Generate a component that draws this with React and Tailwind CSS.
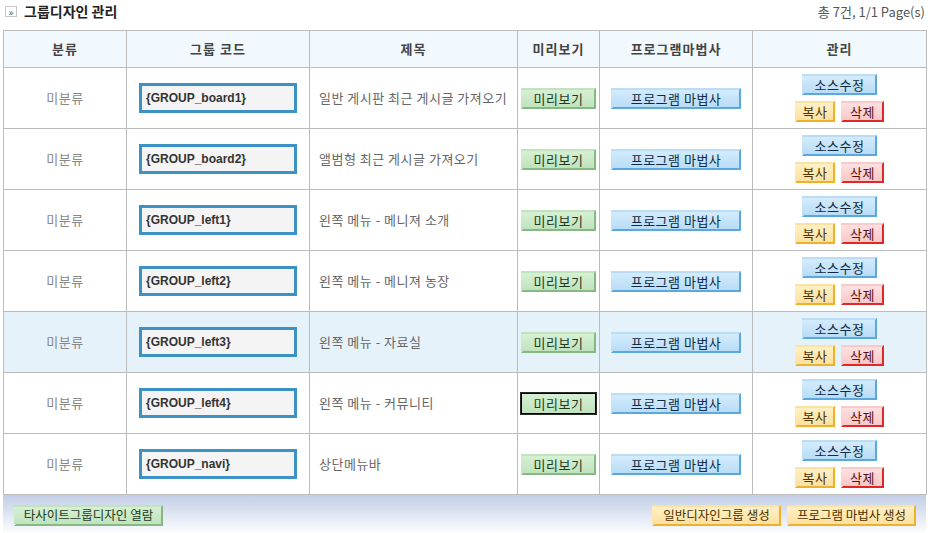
import React from "react";

const rows = [
  { code: "{GROUP_board1}", title: "일반 게시판 최근 게시글 가져오기" },
  { code: "{GROUP_board2}", title: "앨범형 최근 게시글 가져오기" },
  { code: "{GROUP_left1}", title: "왼쪽 메뉴 - 메니져 소개" },
  { code: "{GROUP_left2}", title: "왼쪽 메뉴 - 메니져 농장" },
  { code: "{GROUP_left3}", title: "왼쪽 메뉴 - 자료실", hover: true },
  { code: "{GROUP_left4}", title: "왼쪽 메뉴 - 커뮤니티", focus: true },
  { code: "{GROUP_navi}", title: "상단메뉴바" },
];

const font = { fontFamily: '"Noto Sans CJK KR", "Liberation Sans", sans-serif' };

function Btn({ color, className = "", children }) {
  const styles = {
    green: "bg-gradient-to-b from-[#d6f0d4] to-[#bfe3bd] border-r-[#86b884] border-b-[#86b884] text-[#1f3a1f]",
    blue: "bg-gradient-to-b from-[#d3ecfc] to-[#b9dcf6] border-r-[#5aa8e0] border-b-[#5aa8e0] text-[#0f2a44]",
    orange: "bg-gradient-to-b from-[#fff1c4] to-[#fde0a0] border-r-[#f0b028] border-b-[#f0b028] text-[#4a3200]",
    red: "bg-gradient-to-b from-[#fde0e0] to-[#f9c8c8] border-r-[#e02828] border-b-[#e02828] text-[#5a1010]",
  };
  return (
    <button
      className={`h-[21px] border-2 border-transparent leading-none whitespace-nowrap ${styles[color]} ${className}`}
      style={font}
    >
      {children}
    </button>
  );
}

export default function App() {
  return (
    <div className="w-[928px] h-[533px] bg-white overflow-hidden" style={font}>
      {/* title */}
      <div className="flex items-center justify-between h-[23px] pl-[5px] pr-[3px]">
        <div className="flex items-center gap-[7px]">
          <span className="flex items-center justify-center w-[12px] h-[11px] border border-[#c8c8c8] text-[10px] leading-none text-[#555]">
            »
          </span>
          <span className="text-[14px] font-bold text-[#222]">그룹디자인 관리</span>
        </div>
        <span className="text-[13px] text-[#555]">총 7건, 1/1 Page(s)</span>
      </div>

      <div className="pl-[3px] pr-[2px] pt-[7px]">
        <table className="w-[923px] border-collapse table-fixed text-[13px]">
          <colgroup>
            <col className="w-[123px]" />
            <col className="w-[183px]" />
            <col className="w-[208px]" />
            <col className="w-[82px]" />
            <col className="w-[153px]" />
            <col className="w-[174px]" />
          </colgroup>
          <thead>
            <tr className="h-[37px] bg-[#f1f8fe]">
              {["분류", "그룹 코드", "제목", "미리보기", "프로그램마법사", "관리"].map((h) => (
                <th key={h} className="border border-[#bcbcbc] font-bold text-[#444] text-center tracking-[1px]">
                  {h}
                </th>
              ))}
            </tr>
          </thead>
          <tbody>
            {rows.map((r) => (
              <tr key={r.code} className={`h-[61px] ${r.hover ? "bg-[#e6f2fa]" : "bg-white"}`}>
                <td className="border border-[#bcbcbc] text-center text-[#888] tracking-[0.5px]">미분류</td>
                <td className="border border-[#bcbcbc] pl-[12px]">
                  <div className="w-[158px] h-[30px] border-[3px] border-[#3c92c4] bg-[#f4f4f4] flex items-center pl-[4px] text-[12px] font-bold text-[#333]" style={{ fontFamily: '"Liberation Sans", sans-serif' }}>
                    {r.code}
                  </div>
                </td>
                <td className="border border-[#bcbcbc] pl-[9px] text-[#666] tracking-[0.5px]">{r.title}</td>
                <td className="border border-[#bcbcbc] text-center">
                  <Btn color="green" className={`w-[75px] text-[13px] tracking-[0.5px] ${r.focus ? "!border !border-black outline outline-1 outline-[#2a2a2a]" : ""}`}>
                    미리보기
                  </Btn>
                </td>
                <td className="border border-[#bcbcbc] text-center">
                  <Btn color="blue" className="w-[130px] text-[13px] tracking-[0.5px]">프로그램 마법사</Btn>
                </td>
                <td className="border border-[#bcbcbc]">
                  <div className="flex flex-col items-center gap-[6px]">
                    <Btn color="blue" className="w-[75px] text-[13px] tracking-[0.5px]">소스수정</Btn>
                    <div className="flex gap-[6px]">
                      <Btn color="orange" className="w-[40px] text-[13px] tracking-[0.5px]">복사</Btn>
                      <Btn color="red" className="w-[43px] text-[13px] tracking-[0.5px]">삭제</Btn>
                    </div>
                  </div>
                </td>
              </tr>
            ))}
          </tbody>
        </table>
        <div className="w-[923px] h-[40px] bg-gradient-to-b from-[#c2cee6] to-white flex items-center justify-between pl-[11px] pr-[10px]">
          <Btn color="green" className="w-[149px] text-[12.5px]">타사이트그룹디자인 열람</Btn>
          <div className="flex gap-[6px]">
            <Btn color="orange" className="w-[129px] text-[12.5px]">일반디자인그룹 생성</Btn>
            <Btn color="orange" className="w-[129px] text-[12.5px]">프로그램 마법사 생성</Btn>
          </div>
        </div>
      </div>
    </div>
  );
}
